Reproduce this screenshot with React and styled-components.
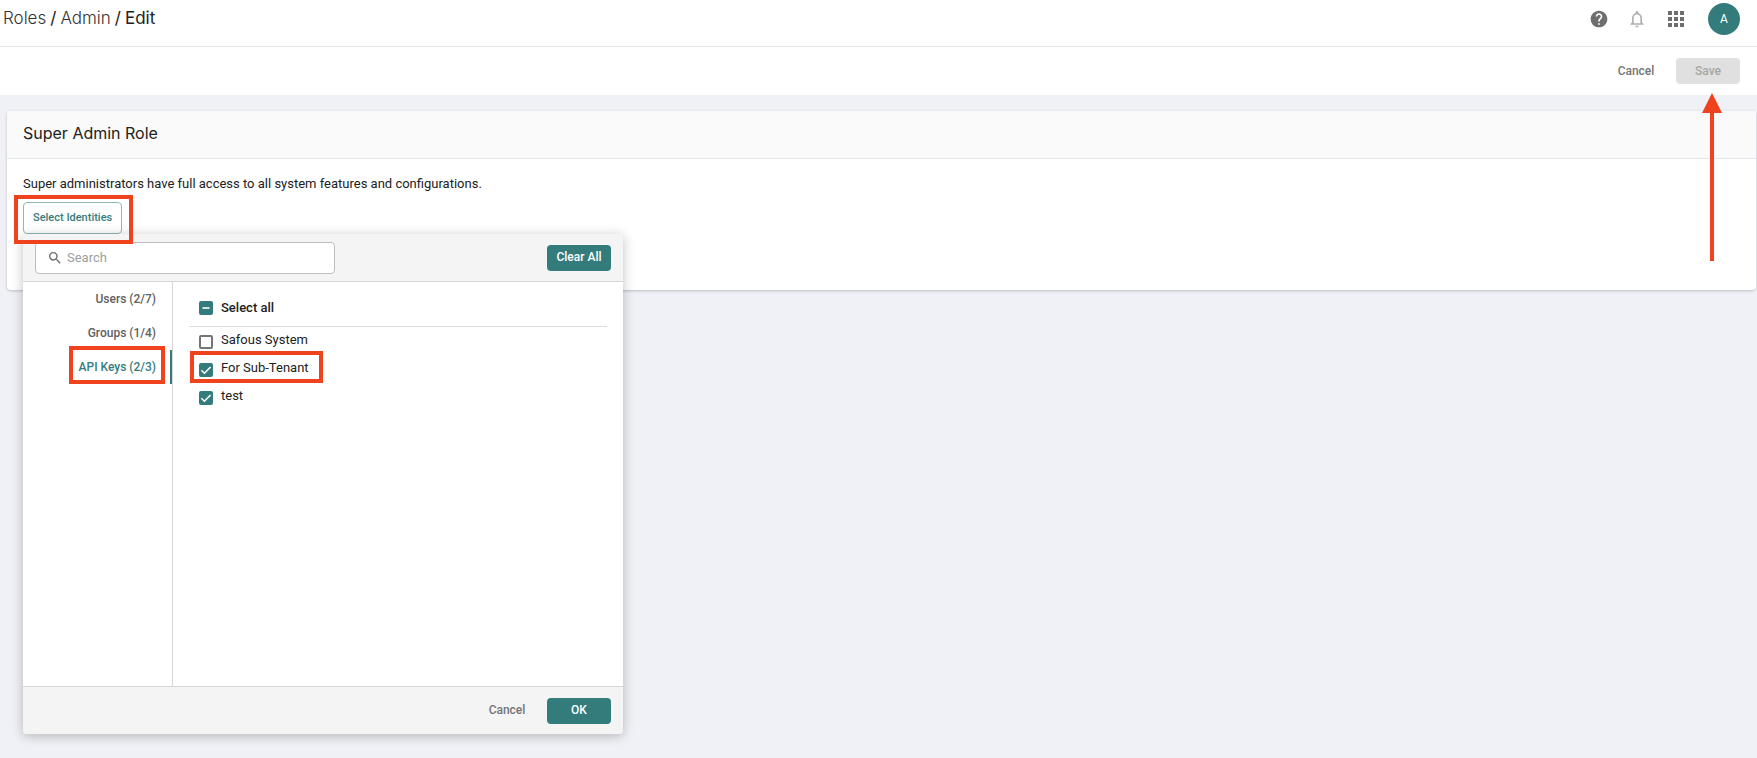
import React, { useEffect, useRef, useState } from 'react';
import styled, { createGlobalStyle, css } from 'styled-components';
import { MdApps, MdHelp, MdNotificationsNone, MdSearch } from 'react-icons/md';

const TEAL = '#347c7c';
const RED = '#ee431d';
const BODY_FONT = 'Roboto, "Liberation Sans", sans-serif';
const TITLE_FONT = 'Inter, "Open Sans", sans-serif';

const GlobalStyle = createGlobalStyle`
  *, *::before, *::after {
    box-sizing: border-box;
  }

  body {
    margin: 0;
    background: #f0f1f6;
    color: #212121;
    font-family: ${BODY_FONT};
    font-size: 13px;
    line-height: 16px;
  }

  button, input {
    font-family: inherit;
  }
`;

const Page = styled.div`
  min-height: 100vh;
  padding-bottom: 24px;
`;

// Header

const Header = styled.header`
  display: flex;
  align-items: center;
  justify-content: space-between;
  padding: 3px 17px 11px 3px;
  background: #fff;
  border-bottom: 1px solid #e6e6f5;
`;

const Breadcrumb = styled.nav`
  display: flex;
  gap: 4px;
  padding-bottom: 2px;
  font-family: ${TITLE_FONT};
  font-size: 17px;
  line-height: 20px;
  color: #212121;
`;

const Crumb = styled.a`
  color: #333;
  font-weight: 300;
  text-decoration: none;
`;

const CurrentCrumb = styled.span`
  font-weight: 400;
`;

const HeaderActions = styled.div`
  display: flex;
  align-items: center;
`;

const IconButton = styled.button`
  display: flex;
  margin-right: ${props => props.$gap};
  padding: 0;
  border: 0;
  background: none;
  color: ${props => props.$color || '#6e6e6e'};
  font-size: ${props => props.$size || '20px'};
  cursor: pointer;
`;

const Avatar = styled.button`
  width: 32px;
  height: 32px;
  padding: 0;
  border: 0;
  border-radius: 50%;
  background: ${TEAL};
  color: #fff;
  font-size: 12px;
  cursor: pointer;
`;

// Buttons

const Button = styled.button`
  height: 26px;
  min-width: 64px;
  padding: 0 9px 1px;
  border: 0;
  border-radius: 4px;
  background: none;
  color: #757575;
  font-size: 12px;
  font-weight: 500;
  line-height: 16px;
  cursor: pointer;

  ${props => props.$primary && css`
    background: ${TEAL};
    color: #fff;
  `}

  &:disabled {
    background: #e0e0e0;
    color: #a6a6a6;
    cursor: default;
  }
`;

const OutlineButton = styled.button`
  height: 32px;
  padding: 0 9px 2px;
  border: 1px solid #8fb9b9;
  border-radius: 4px;
  background: #fff;
  color: ${TEAL};
  font-size: 11px;
  font-weight: 500;
  cursor: pointer;
`;

const Toolbar = styled.div`
  display: flex;
  align-items: center;
  justify-content: flex-end;
  gap: 8px;
  height: 48px;
  padding: 0 17px;
  background: #fff;
`;

// Callouts drawn over the controls

const Marked = styled.span`
  position: relative;
  display: inline-flex;
`;

const Highlight = styled.span`
  position: absolute;
  z-index: 3;
  inset: ${props => props.$inset};
  border: 4px solid ${RED};
  pointer-events: none;
`;

const Arrow = styled.svg`
  position: absolute;
  z-index: 3;
  top: 35px;
  right: 18px;
  pointer-events: none;
`;

// Card

const Card = styled.section`
  margin: 16px 1px 0 7px;
  border-radius: 4px;
  background: #fff;
  box-shadow: 0 1px 3px rgba(0, 0, 0, 0.22);
`;

const CardHeader = styled.div`
  padding: 12px 16px 15px;
  border-bottom: 1px solid #e3e9e9;
  border-radius: 4px 4px 0 0;
  background: #fafafa;
`;

const CardTitle = styled.h1`
  margin: 0;
  font-family: ${TITLE_FONT};
  font-size: 16px;
  font-weight: 400;
  line-height: 20px;
`;

const CardBody = styled.div`
  padding: 17px 16px 56px;
`;

const Description = styled.p`
  margin: 0 0 10px;
`;

// Identity picker

const Popover = styled.div`
  position: absolute;
  z-index: 2;
  top: 100%;
  left: 0;
  display: flex;
  flex-direction: column;
  width: 600px;
  height: 500px;
  border-radius: 4px;
  background: #fff;
  box-shadow: 0 2px 12px rgba(0, 0, 0, 0.25);
`;

const PopoverBar = styled.div`
  display: flex;
  align-items: center;
  justify-content: ${props => props.$justify};
  gap: 8px;
  height: 48px;
  padding: 0 12px;
  background: #f4f4f4;
`;

const PopoverHeader = styled(PopoverBar)`
  border-bottom: 1px solid #d6d6d6;
  border-radius: 4px 4px 0 0;
`;

const PopoverFooter = styled(PopoverBar)`
  border-top: 1px solid #d6d6d6;
  border-radius: 0 0 4px 4px;
`;

const SearchBox = styled.label`
  display: flex;
  align-items: center;
  gap: 4px;
  width: 300px;
  height: 32px;
  padding: 0 11px;
  border: 1px solid #bdbdbd;
  border-radius: 4px;
  background: #fff;
  color: #6e6e6e;
  font-size: 16px;
`;

const SearchInput = styled.input`
  flex: 1;
  min-width: 0;
  padding: 0;
  border: 0;
  outline: 0;
  background: none;
  color: #212121;
  font-size: 13px;

  &::placeholder {
    color: #9e9e9e;
    opacity: 1;
  }
`;

const PopoverBody = styled.div`
  display: flex;
  flex: 1;
  min-height: 0;
`;

const TabList = styled.div`
  width: 150px;
  border-right: 1px solid #d6d6d6;
`;

const Tab = styled.button`
  position: relative;
  display: flex;
  align-items: center;
  justify-content: flex-end;
  width: 100%;
  height: 34px;
  padding: 0 14px 1px 0;
  border: 0;
  border-right: 2px solid ${props => (props.$active ? TEAL : 'transparent')};
  background: none;
  color: ${props => (props.$active ? TEAL : '#616161')};
  font-size: 12px;
  font-weight: 500;
  cursor: pointer;
`;

const Panel = styled.div`
  flex: 1;
  padding: 8px 16px;
`;

const SelectAllRow = styled.div`
  display: flex;
  align-items: center;
  height: 37px;
  padding-left: 10px;
  border-bottom: 1px solid #dedede;
  font-weight: 500;
`;

const OptionList = styled.ul`
  margin: 0;
  padding: 0 0 0 10px;
  list-style: none;
`;

const Option = styled.li`
  display: flex;
  align-items: center;
  height: 28px;
`;

const CheckLabel = styled.label`
  position: relative;
  display: flex;
  align-items: ${props => (props.$bold ? 'center' : 'flex-end')};
  gap: 8px;
  cursor: pointer;
`;

const LabelText = styled.span`
  padding-bottom: ${props => (props.$raised ? '2px' : '0')};
  line-height: 14px;
`;

const Box = styled.span`
  display: grid;
  width: 14px;
  height: 14px;

  > * {
    grid-area: 1 / 1;
  }
`;

const BoxInput = styled.input`
  appearance: none;
  width: 14px;
  height: 14px;
  margin: 0;
  border: 2px solid #757575;
  border-radius: 2px;
  background: #fff;
  cursor: pointer;

  &:checked,
  &:indeterminate {
    border-color: ${TEAL};
    background: ${TEAL};
  }
`;

const BoxGlyph = styled.svg`
  pointer-events: none;
`;

const IDENTITIES = {
  apiKeys: [
    { id: 'safous', name: 'Safous System' },
    { id: 'sub-tenant', name: 'For Sub-Tenant', highlight: true },
    { id: 'test', name: 'test' },
  ],
};

const TABS = [
  { id: 'users', label: 'Users (2/7)' },
  { id: 'groups', label: 'Groups (1/4)' },
  { id: 'apiKeys', label: 'API Keys (2/3)', highlight: true },
];

const Checkbox = ({ checked, indeterminate, onChange, label, bold }) => {
  const ref = useRef(null);

  useEffect(() => {
    ref.current.indeterminate = Boolean(indeterminate);
  }, [indeterminate]);

  return (
    <>
      <Box>
        <BoxInput ref={ref} type="checkbox" checked={checked} onChange={onChange} />
        <BoxGlyph width="14" height="14" viewBox="0 0 14 14" fill="none" stroke="#fff" aria-hidden="true">
          {indeterminate && <path d="M3.5 7h7" strokeWidth="1.6" />}
          {checked && !indeterminate && <path d="M2.4 7.2l3 3 6.2-6.2" strokeWidth="1.6" />}
        </BoxGlyph>
      </Box>
      <LabelText $raised={!bold}>{label}</LabelText>
    </>
  );
};

const IdentityPicker = () => {
  const [activeTab, setActiveTab] = useState('apiKeys');
  const [selected, setSelected] = useState(['sub-tenant', 'test']);
  const [query, setQuery] = useState('');

  const items = IDENTITIES[activeTab] || [];
  const visible = items.filter(item => item.name.toLowerCase().includes(query.toLowerCase()));
  const allSelected = items.length > 0 && items.every(item => selected.includes(item.id));
  const someSelected = items.some(item => selected.includes(item.id));

  const toggle = (id) => {
    setSelected(prev => (prev.includes(id) ? prev.filter(x => x !== id) : [...prev, id]));
  };

  const toggleAll = () => {
    setSelected(allSelected ? [] : items.map(item => item.id));
  };

  return (
    <Popover role="dialog" aria-label="Select Identities">
      <PopoverHeader $justify="space-between">
        <SearchBox>
          <MdSearch aria-hidden="true" />
          <SearchInput
            type="text"
            placeholder="Search"
            aria-label="Search"
            value={query}
            onChange={e => setQuery(e.target.value)}
          />
        </SearchBox>
        <Button type="button" $primary onClick={() => setSelected([])}>Clear All</Button>
      </PopoverHeader>

      <PopoverBody>
        <TabList role="tablist">
          {TABS.map(tab => (
            <Tab
              key={tab.id}
              type="button"
              role="tab"
              aria-selected={tab.id === activeTab}
              $active={tab.id === activeTab}
              onClick={() => setActiveTab(tab.id)}
            >
              {tab.label}
              {tab.highlight && <Highlight $inset="-4px 5px 0 46px" />}
            </Tab>
          ))}
        </TabList>

        <Panel role="tabpanel">
          <SelectAllRow>
            <CheckLabel $bold>
              <Checkbox
                bold
                checked={allSelected}
                indeterminate={someSelected && !allSelected}
                onChange={toggleAll}
                label="Select all"
              />
            </CheckLabel>
          </SelectAllRow>
          <OptionList>
            {visible.map(item => (
              <Option key={item.id}>
                <CheckLabel>
                  <Checkbox
                    checked={selected.includes(item.id)}
                    onChange={() => toggle(item.id)}
                    label={item.name}
                  />
                  {item.highlight && <Highlight $inset="-10px -14px -6px -9px" />}
                </CheckLabel>
              </Option>
            ))}
          </OptionList>
        </Panel>
      </PopoverBody>

      <PopoverFooter $justify="flex-end">
        <Button type="button">Cancel</Button>
        <Button type="button" $primary>OK</Button>
      </PopoverFooter>
    </Popover>
  );
};

const App = () => (
  <Page>
    <GlobalStyle />
    <Header>
      <Breadcrumb aria-label="Breadcrumb">
        <Crumb href="#roles">Roles</Crumb>
        <span>/</span>
        <Crumb href="#admin">Admin</Crumb>
        <span>/</span>
        <CurrentCrumb>Edit</CurrentCrumb>
      </Breadcrumb>
      <HeaderActions>
        <IconButton type="button" aria-label="Help" $gap="18px"><MdHelp /></IconButton>
        <IconButton type="button" aria-label="Notifications" $gap="17px" $color="#b0b0b0">
          <MdNotificationsNone />
        </IconButton>
        <IconButton type="button" aria-label="Apps" $gap="20px" $size="24px"><MdApps /></IconButton>
        <Avatar type="button" aria-label="Account">A</Avatar>
      </HeaderActions>
    </Header>

    <Toolbar>
      <Button type="button">Cancel</Button>
      <Marked>
        <Button type="button" disabled>Save</Button>
        <Arrow width="20" height="168" viewBox="0 0 20 168" fill={RED} aria-hidden="true">
          <path d="M10 0l10 20h-8v148h-4v-148h-8z" />
        </Arrow>
      </Marked>
    </Toolbar>

    <main>
      <Card>
        <CardHeader>
          <CardTitle>Super Admin Role</CardTitle>
        </CardHeader>
        <CardBody>
          <Description>Super administrators have full access to all system features and configurations.</Description>
          <Marked>
            <OutlineButton type="button" aria-haspopup="dialog" aria-expanded="true">Select Identities</OutlineButton>
            <Highlight $inset="-7px -11px -10px -9px" />
            <IdentityPicker />
          </Marked>
        </CardBody>
      </Card>
    </main>
  </Page>
);

export default App;
